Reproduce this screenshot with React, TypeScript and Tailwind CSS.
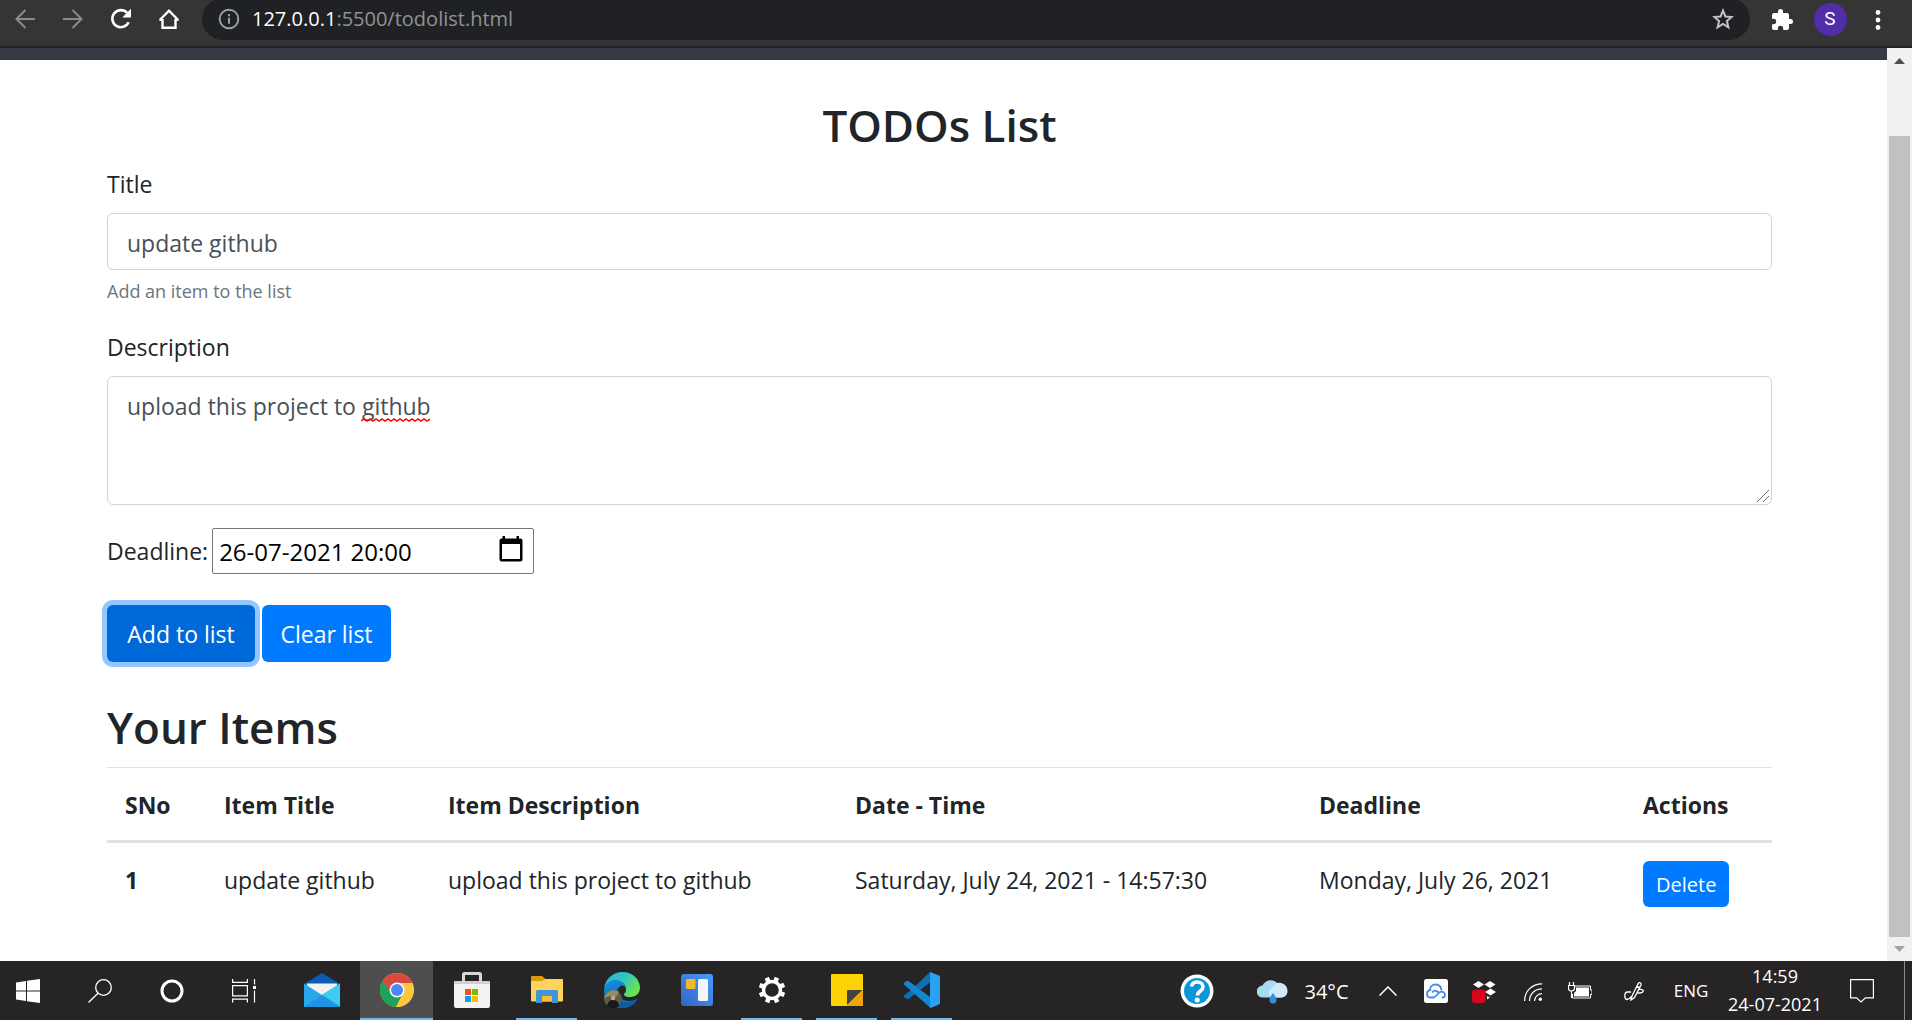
import React, { useState } from "react";

const svgBase = { xmlns: "http://www.w3.org/2000/svg", "aria-hidden": true } as const;

function BrowserButton({ label, className, children }: { label: string; className: string; children: React.ReactNode }) {
  return (
    <button type="button" aria-label={label} className={`flex h-full items-center justify-center ${className}`}>
      {children}
    </button>
  );
}

function BrowserBar() {
  return (
    <header className="flex h-12 shrink-0 items-start overflow-hidden border-b-2 border-[#202124] bg-[#353535]">
      <div className="flex h-[38px] shrink-0 items-center text-white">
        <BrowserButton label="Back" className="w-[50px] text-[#8b8b8b]">
          <svg {...svgBase} width="20" height="20" viewBox="0 0 20 20" fill="none" stroke="currentColor" strokeWidth="2">
            <path d="M20 10H2M10.500 1L1.500 10l9 9" />
          </svg>
        </BrowserButton>
        <BrowserButton label="Forward" className="w-[46px] text-[#8b8b8b]">
          <svg {...svgBase} width="20" height="20" viewBox="0 0 20 20" fill="none" stroke="currentColor" strokeWidth="2">
            <path d="M0 10h18M9.500 1l9 9-9 9" />
          </svg>
        </BrowserButton>
        <BrowserButton label="Reload" className="w-[50px]">
          <svg {...svgBase} width="22" height="22" viewBox="0 0 22 22">
            <path d="M18.600 14.200A8.500 8.500 0 1 1 17.200 5" fill="none" stroke="currentColor" strokeWidth="2.600" />
            <path d="M21 0.800v8.700h-8.700z" fill="currentColor" />
          </svg>
        </BrowserButton>
        <BrowserButton label="Home" className="w-[46px]">
          <svg {...svgBase} width="22" height="22" viewBox="0 0 22 22" fill="none" stroke="currentColor" strokeWidth="2.400">
            <path d="M4.500 11v8.800h13V11M1.800 12L11 2.600 20.200 12M1.500 11.800h3M17.500 11.800h3" />
          </svg>
        </BrowserButton>
      </div>
      <div className="-mt-0.5 ml-2.5 flex h-[42px] min-w-0 flex-1 items-center rounded-full bg-[#202124] px-4">
        <svg {...svgBase} width="22" height="22" viewBox="0 0 22 22" className="shrink-0 text-[#9aa0a6]">
          <circle cx="11" cy="11" r="9.300" fill="none" stroke="currentColor" strokeWidth="1.900" />
          <path d="M10 9.800h2v6h-2zM10 6h2v2.200h-2z" fill="currentColor" />
        </svg>
        <a href="#top" aria-label="Address" className="ml-3 flex-1 truncate font-['Open_Sans',sans-serif] text-[20px] text-[#8f9296]">
          <span className="text-white">127.0.0.1</span>:5500/todolist.html
        </a>
        <button type="button" aria-label="Bookmark this page">
          <svg {...svgBase} width="22" height="22" viewBox="0 0 22 22" fill="none" stroke="#c4c4c4" strokeWidth="2">
            <path d="M11 2.600l2.400 5.900 6.300.5-4.800 4.100 1.500 6.200L11 16l-5.400 3.300 1.500-6.200L2.300 9l6.300-.5z" />
          </svg>
        </button>
      </div>
      <div className="flex h-[39px] shrink-0 items-center text-white">
        <BrowserButton label="Extensions" className="ml-2 w-12">
          <svg {...svgBase} width="24" height="24" viewBox="0 0 24 24" fill="currentColor">
            <path d="M20.500 11H19V7c0-1.100-.9-2-2-2h-4V3.500a2.500 2.500 0 0 0-5 0V5H4c-1.100 0-2 .9-2 2v3.800h1.500a2.700 2.700 0 0 1 0 5.400H2V20c0 1.100.9 2 2 2h3.800v-1.500a2.700 2.700 0 0 1 5.400 0V22H17c1.100 0 2-.9 2-2v-4h1.500a2.500 2.500 0 0 0 0-5z" />
          </svg>
        </BrowserButton>
        <BrowserButton label="Profile" className="w-12">
          <span className="flex size-[33px] items-center justify-center rounded-full bg-[#512da8] font-['Roboto',sans-serif] text-[19px]">S</span>
        </BrowserButton>
        <BrowserButton label="Menu" className="mr-2.5 w-12">
          <svg {...svgBase} width="6" height="22" viewBox="0 0 6 22" fill="currentColor">
            <circle cx="3" cy="3.500" r="2.400" />
            <circle cx="3" cy="11" r="2.400" />
            <circle cx="3" cy="18.500" r="2.400" />
          </svg>
        </BrowserButton>
      </div>
    </header>
  );
}

function ScrollBar() {
  return (
    <div aria-hidden="true" className="flex w-[25px] shrink-0 flex-col items-center bg-[#f1f1f1]">
      <div className="flex h-[26px] items-center">
        <svg {...svgBase} width="11" height="6" viewBox="0 0 11 6"><path d="M0 6L5.500 0 11 6z" fill="#505050" /></svg>
      </div>
      <div className="mt-[62px] w-[21px] flex-1 bg-[#c1c1c1]" />
      <div className="flex h-6 items-center">
        <svg {...svgBase} width="11" height="6" viewBox="0 0 11 6"><path d="M0 0h11L5.500 6z" fill="#a3a3a3" /></svg>
      </div>
    </div>
  );
}

type Item = { title: string; description: string; created: string; deadline: string };

const fieldClass = "block w-full rounded-md border border-[#ced4da] bg-white px-[19px] text-[23px] leading-9 text-[#495057]";
const buttonClass = "rounded-md text-[23px] leading-9 h-[57px] text-white";

function TodoPage() {
  const [title, setTitle] = useState("update github");
  const [description, setDescription] = useState("upload this project to github");
  const [deadline, setDeadline] = useState("26-07-2021 20:00");
  const [items, setItems] = useState<Item[]>([
    {
      title: "update github",
      description: "upload this project to github",
      created: "Saturday, July 24, 2021 - 14:57:30",
      deadline: "Monday, July 26, 2021",
    },
  ]);

  return (
    <main className="min-w-0 flex-1 border-t-12 border-[#363a43] bg-white pr-[115px] pl-[107px] font-['Open_Sans',sans-serif] text-[23px] leading-9 text-[#212529]">
      <h1 className="mt-9 text-center text-[44px] leading-[58px] font-semibold">TODOs List</h1>
      <form onSubmit={(e) => e.preventDefault()}>
        <label htmlFor="title" className="mt-3 block">Title</label>
        <input id="title" className={`mt-[11px] h-[57px] pt-0.5 ${fieldClass}`} value={title} onChange={(e) => setTitle(e.target.value)} />
        <small className="mt-[7px] block text-[18px] leading-7 text-[#6c757d]">Add an item to the list</small>
        <label htmlFor="description" className="mt-6 block">Description</label>
        <div className="relative mt-[11px]">
          <textarea
            id="description"
            spellCheck={false}
            className={`h-[129px] resize-none py-[11px] ${fieldClass}`}
            value={description}
            onChange={(e) => setDescription(e.target.value)}
          />
          <svg {...svgBase} width="69" height="4" viewBox="0 0 69 4" className="absolute top-[42px] left-[254px]" fill="none" stroke="#f00" strokeWidth="1.500">
            <path d="M0 3l3-2 3 2 3-2 3 2 3-2 3 2 3-2 3 2 3-2 3 2 3-2 3 2 3-2 3 2 3-2 3 2 3-2 3 2 3-2 3 2 3-2 3 2 3-2" />
          </svg>
          <svg {...svgBase} width="14" height="14" viewBox="0 0 14 14" className="absolute right-0.5 bottom-0.5" fill="none" stroke="#6b6b6b" strokeWidth="1">
            <path d="M1 13L13 1M7 13l6-6" />
          </svg>
        </div>
        <div className="mt-[23px] flex items-center gap-1">
          <label htmlFor="deadline">Deadline:</label>
          <div className="flex h-[46px] w-[322px] items-center rounded-xs border border-[#767676] pr-2.5 pl-1.5">
            <input id="deadline" className="min-w-0 flex-1 bg-transparent pt-0.5 text-[24px] text-black" value={deadline} onChange={(e) => setDeadline(e.target.value)} />
            <button type="button" aria-label="Choose date" className="pb-1">
              <svg {...svgBase} width="24" height="26" viewBox="0 0 24 26" fill="#000">
                <path d="M3.500 0h2.500v2.500h11.500V0H20v2.500h1.500A2 2 0 0 1 23.500 4.500v19a2 2 0 0 1-2 2h-19a2 2 0 0 1-2-2v-19a2 2 0 0 1 2-2h1zM3 8v15h18V8z" />
              </svg>
            </button>
          </div>
        </div>
        <div className="mt-[31px] flex gap-[7px]">
          <button type="submit" className={`w-[148px] bg-[#0069d9] ring-5 ring-[#94c7ff] ${buttonClass}`}>Add to list</button>
          <button type="button" className={`w-[129px] bg-[#007bff] ${buttonClass}`} onClick={() => setItems([])}>Clear list</button>
        </div>
      </form>
      <h2 className="mt-9 text-[44px] leading-[58px] font-semibold">Your Items</h2>
      <table className="mt-[11px] w-full table-fixed border-t border-[#dee2e6] text-left">
        <colgroup>
          <col className="w-[99px]" />
          <col className="w-[224px]" />
          <col className="w-[407px]" />
          <col className="w-[464px]" />
          <col className="w-[324px]" />
          <col className="w-[147px]" />
        </colgroup>
        <thead>
          <tr className="border-b-3 border-[#dee2e6]">
            {["SNo", "Item Title", "Item Description", "Date - Time", "Deadline", "Actions"].map((h) => (
              <th key={h} scope="col" className="px-[18px] pt-[19px] pb-[17px] font-bold whitespace-nowrap">{h}</th>
            ))}
          </tr>
        </thead>
        <tbody>
          {items.map((item, i) => (
            <tr key={item.title} className="align-top">
              <th scope="row" className="px-[18px] pt-[19px] font-bold">{i + 1}</th>
              <td className="px-[18px] pt-[19px]">{item.title}</td>
              <td className="px-[18px] pt-[19px]">{item.description}</td>
              <td className="pt-[19px] pl-[18px]">{item.created}</td>
              <td className="px-[18px] pt-[19px]">{item.deadline}</td>
              <td className="p-[18px]">
                <button type="button" className="block h-[46px] rounded-md bg-[#007bff] px-[13px] pt-0.5 text-[20px] leading-7 text-white" onClick={() => setItems(items.filter((_, n) => n !== i))}>
                  Delete
                </button>
              </td>
            </tr>
          ))}
        </tbody>
      </table>
    </main>
  );
}

function MailIcon() {
  return (
    <svg {...svgBase} width="36" height="34" viewBox="0 0 36 34">
      <path d="M0 11L18 0l18 11v8H0z" fill="#0a5cb0" />
      <path d="M3 10.500h30V22H3z" fill="#f2f2f2" />
      <path d="M0 10.500l18 11.500L36 10.500V34H0z" fill="#28a8ea" />
      <path d="M18 22l18-11.500V33z" fill="#3fcbf2" />
      <path d="M0 34l18-12 18 12z" fill="#1e93e4" />
    </svg>
  );
}

function ChromeIcon() {
  return (
    <svg {...svgBase} width="34" height="34" viewBox="0 0 34 34">
      <circle cx="17" cy="17" r="17" fill="#fdc73e" />
      <path d="M2.300 8.500A17 17 0 0 1 31.700 8.500L32.300 10H17L10.900 20.500z" fill="#d9493f" />
      <path d="M2.900 7.500A17 17 0 0 0 16 34l7-13.500-6 3.500-6.100-3.500z" fill="#1da15d" />
      <path d="M17 10h15.300A17 17 0 0 1 16 34l7.100-13.500z" fill="#fdc73e" />
      <circle cx="17" cy="17" r="7.500" fill="#fff" />
      <circle cx="17" cy="17" r="6" fill="#4a8af4" />
    </svg>
  );
}

function StoreIcon() {
  return (
    <svg {...svgBase} width="36" height="36" viewBox="0 0 36 36">
      <path d="M9.500 12V2.500a1 1 0 0 1 1-1h15a1 1 0 0 1 1 1V12" fill="none" stroke="#d8d8d8" strokeWidth="3" />
      <path d="M0 9h36v25a2 2 0 0 1-2 2H2a2 2 0 0 1-2-2z" fill="#f3f3f3" />
      <path d="M0 9h36v3H0z" fill="#d0d0d0" />
      <path d="M11 17h6v6h-6z" fill="#f25022" />
      <path d="M18 17h6v6h-6z" fill="#7fba00" />
      <path d="M11 24h6v6h-6z" fill="#00a4ef" />
      <path d="M18 24h6v6h-6z" fill="#ffb900" />
    </svg>
  );
}

function ExplorerIcon() {
  return (
    <svg {...svgBase} width="32" height="27" viewBox="0 0 32 27">
      <path d="M0 1a1 1 0 0 1 1-1h10l4 3.500V8H0z" fill="#e09a09" />
      <path d="M0 5h11l4-2h16a1 1 0 0 1 1 1v20.500a1 1 0 0 1-1 1H1a1 1 0 0 1-1-1z" fill="#ffd35c" />
      <path d="M5 27V15.500a1.500 1.500 0 0 1 1.500-1.500h19a1.500 1.500 0 0 1 1.500 1.500V27h-6v-7H11v7z" fill="#3d95da" />
      <path d="M11 20h10v5.500H11z" fill="#fbbd2d" />
    </svg>
  );
}

function EdgeIcon() {
  return (
    <svg {...svgBase} width="36" height="36" viewBox="0 0 36 36">
      <defs>
        <linearGradient id="edgeTop" x1="0" y1="0" x2="1" y2="0.600">
          <stop offset="0" stopColor="#2ab0e8" />
          <stop offset="0.500" stopColor="#2fc5c4" />
          <stop offset="1" stopColor="#6be64b" />
        </linearGradient>
        <linearGradient id="edgeSide" x1="0" y1="0" x2="0.300" y2="1">
          <stop offset="0" stopColor="#1590df" />
          <stop offset="1" stopColor="#0b6cc0" />
        </linearGradient>
      </defs>
      <path d="M0 17C1 7 9 0 18.500 0 28.500 0 36 7.500 36 15.500c0 6-4.500 9.500-9.500 9.500-4 0-6.500-1.200-6.500-2.600 0-1 2-1.700 2-5C22 12 17 8.500 11.500 8.500 6 8.500 2 12 0 17z" fill="url(#edgeTop)" />
      <path d="M0 18.500C1 11.500 6 8 11.500 8c6 0 10.500 4 10.500 8.500-1-2.500-3.500-3.500-5.500-2.500-3.500 2-3.500 8-.5 11.500 4 4.500 11 4 17.500 1.500C30.500 33 25 36 18 36 7 36-.5 28 0 18.500z" fill="url(#edgeSide)" />
      <path d="M15 15c-4 4-3.500 9 0 12.500 5 4.500 12 3 18-.5C30 33 25 36 18 36c-6-2-9-7-8.500-12 .3-4 2.500-7.500 5.500-9z" fill="#0c59a4" />
      <circle cx="9" cy="27" r="9" fill="#59603f" />
      <path d="M0 26c2-7 9-10 15-6l-3 5-6-1z" fill="#8b9165" />
      <path d="M3 34c1-5 3-6 6-6s6 2 6 6c-3 3-9 3-12 0z" fill="#17171d" />
      <circle cx="9" cy="26" r="2.200" fill="#d79a80" />
    </svg>
  );
}

function BoardIcon() {
  return (
    <svg {...svgBase} width="32" height="32" viewBox="0 0 32 32">
      <defs>
        <linearGradient id="board" x1="1" y1="0" x2="0" y2="1">
          <stop offset="0" stopColor="#4c9aff" />
          <stop offset="1" stopColor="#3365c4" />
        </linearGradient>
      </defs>
      <rect width="32" height="32" rx="3" fill="url(#board)" />
      <rect x="5" y="5" width="9.500" height="10" rx="1.500" fill="#f5b82a" />
      <rect x="17" y="5" width="10" height="22" rx="1.500" fill="#f4f5f8" />
    </svg>
  );
}

function GearIcon() {
  return (
    <svg {...svgBase} width="28" height="28" viewBox="0 0 28 28" stroke="#fff">
      <circle cx="14" cy="14" r="8.500" fill="none" strokeWidth="3.400" />
      <g strokeWidth="4.600">
        <path d="M12.500 0.800l.6 4M15.500 27.200l-.6-4" transform="rotate(28 14 14)" />
        <path d="M12.500 0.800l.6 4M15.500 27.200l-.6-4" transform="rotate(73 14 14)" />
        <path d="M12.500 0.800l.6 4M15.500 27.200l-.6-4" transform="rotate(118 14 14)" />
        <path d="M12.500 0.800l.6 4M15.500 27.200l-.6-4" transform="rotate(163 14 14)" />
      </g>
    </svg>
  );
}

function NotesIcon() {
  return (
    <svg {...svgBase} width="32" height="32" viewBox="0 0 32 32">
      <rect width="32" height="32" rx="1" fill="#fdd207" />
      <path d="M16 31V17a1 1 0 0 1 1-1h14.500z" fill="#434343" />
      <path d="M16 32L32 16v15a1 1 0 0 1-1 1z" fill="#efa30d" />
    </svg>
  );
}

function CodeIcon() {
  return (
    <svg {...svgBase} width="36" height="36" viewBox="0 0 36 36">
      <path d="M26 0L7.500 17.500 0 23.500V25l2.500 2 2 .1L26 10.500z" fill="#0a70b0" />
      <path d="M26.500 36L0 12.500V11l2.500-2h2L26 25z" fill="#1287d0" />
      <path d="M26 0l9 3.500a1.500 1.500 0 0 1 1 1.500v26a1.500 1.500 0 0 1-1 1.500L26.500 36c-.5 0-.5-.5-.5-1z" fill="#29a2f4" />
    </svg>
  );
}

const apps = [
  { name: "Mail", icon: <MailIcon />, state: "idle" },
  { name: "Chrome", icon: <ChromeIcon />, state: "active" },
  { name: "Store", icon: <StoreIcon />, state: "idle" },
  { name: "File Explorer", icon: <ExplorerIcon />, state: "open" },
  { name: "Edge", icon: <EdgeIcon />, state: "idle" },
  { name: "Board", icon: <BoardIcon />, state: "idle" },
  { name: "Settings", icon: <GearIcon />, state: "open" },
  { name: "Sticky Notes", icon: <NotesIcon />, state: "open" },
  { name: "Code", icon: <CodeIcon />, state: "open" },
];

function TrayButton({ label, className, children }: { label: string; className: string; children: React.ReactNode }) {
  return (
    <button type="button" aria-label={label} className={`flex h-full shrink-0 items-center justify-center ${className}`}>
      {children}
    </button>
  );
}

function TaskBar() {
  return (
    <footer className="flex h-[59px] shrink-0 bg-[#272425] font-['Open_Sans',sans-serif] text-white">
      <div className="flex shrink-0">
        <TrayButton label="Start" className="w-16 pr-2">
          <svg {...svgBase} width="24" height="24" viewBox="0 0 24 24" fill="#fff">
            <path d="M0 3.400l10-1.400v9.500H0zM11 1.800L24 0v11.500H11zM0 12.500h10V22L0 20.600zM11 12.500h13V24l-13-1.800z" />
          </svg>
        </TrayButton>
        <TrayButton label="Search" className="w-[72px]">
          <svg {...svgBase} width="24" height="24" viewBox="0 0 24 24" fill="none" stroke="#fff" strokeWidth="1.300">
            <circle cx="15.500" cy="8.500" r="7.800" />
            <path d="M10 14.200L0.500 23.500" />
          </svg>
        </TrayButton>
        <TrayButton label="Cortana" className="w-[72px]">
          <svg {...svgBase} width="24" height="24" viewBox="0 0 24 24" fill="none" stroke="#fff" strokeWidth="3">
            <circle cx="12" cy="12" r="10" />
          </svg>
        </TrayButton>
        <TrayButton label="Task view" className="w-[72px]">
          <svg {...svgBase} width="24" height="24" viewBox="0 0 24 24" fill="none" stroke="#fff" strokeWidth="1.200">
            <path d="M.6 0v3.400h14.800V0M.6 6.600h14.800v10.200H.6zM.6 23.500v-3.400h14.800v3.400M22.500 0v5.500M22.500 11.500v12" />
            <path d="M21 7h3v3h-3z" fill="#fff" stroke="none" />
          </svg>
        </TrayButton>
        <nav aria-label="Applications" className="ml-1 flex">
          {apps.map((app) => (
            <button key={app.name} type="button" aria-label={app.name} className="flex h-full w-[75px] justify-center">
              <span
                className={
                  app.state === "active"
                    ? "flex h-full w-[73px] items-center justify-center border-b-2 border-[#76b9ed] bg-[#4e4e4e]"
                    : app.state === "open"
                      ? "flex h-full w-[61px] items-center justify-center border-b-2 border-[#76b9ed]"
                      : "flex h-full w-[61px] items-center justify-center border-b-2 border-transparent"
                }
              >
                {app.icon}
              </span>
            </button>
          ))}
        </nav>
      </div>
      <div className="ml-auto flex shrink-0">
        <TrayButton label="Help" className="w-[94px]">
          <svg {...svgBase} width="34" height="34" viewBox="0 0 34 34">
            <circle cx="17" cy="17" r="16.500" fill="#fff" />
            <circle cx="17" cy="17" r="13" fill="#0a97d9" />
            <path d="M11.500 12.500c.5-3 3-4.500 5.500-4.500 3.500 0 6 2 6 5 0 4-5.500 4-5.500 8.500" fill="none" stroke="#fff" strokeWidth="3.600" />
            <circle cx="17.200" cy="26" r="2.500" fill="#fff" />
          </svg>
        </TrayButton>
        <TrayButton label="Weather" className="w-[118px] gap-4 pt-0.5">
          <svg {...svgBase} width="31" height="24" viewBox="0 0 31 24">
            <path d="M6 17.500a6 6 0 0 1-.5-12A9 9 0 0 1 21 4a7 7 0 0 1 3 13.500z" fill="#a9d8f5" />
            <path d="M14 17.500a5.500 5.500 0 0 1 1-9.500 8 8 0 0 1 15.500 3c0 4-2.500 6.500-6.500 6.500z" fill="#cfeafa" />
            <path d="M16 13c2 3 3.500 4.500 3.500 7a3.500 3.500 0 0 1-7 0c0-2.500 1.500-4 3.500-7z" fill="#3a8de0" />
          </svg>
          <span className="text-[20px]">34°C</span>
        </TrayButton>
        <TrayButton label="Show hidden icons" className="w-[52px]">
          <svg {...svgBase} width="18" height="10" viewBox="0 0 18 10" fill="none" stroke="#fff" strokeWidth="1.500">
            <path d="M.5 9.500L9 1l8.500 8.500" />
          </svg>
        </TrayButton>
        <TrayButton label="Cloud backup" className="w-11">
          <svg {...svgBase} width="24" height="24" viewBox="0 0 24 24">
            <rect width="24" height="24" rx="2.500" fill="#fff" />
            <path d="M11 17.500c2-.5 3-3.500 5-4.500 2.500-1 5 .5 5 3 0 1.500-1 2.500-2.500 2.500M14.500 13.500c-1.500-2-4.500-2.500-6-.5M6 11C6 7.500 8.500 5.500 11.500 5.500c3.200 0 5.500 2.200 5.800 5.200M6.500 11C4.500 11.300 3 12.800 3 15c0 2 1.500 3.500 3.500 3.500h3.500" fill="none" stroke="#4a86f0" strokeWidth="1.800" strokeLinecap="round" />
          </svg>
        </TrayButton>
        <TrayButton label="Dropbox" className="w-[52px]">
          <svg {...svgBase} width="24" height="24" viewBox="0 0 24 24">
            <path d="M6.500 2L12 5.500 6.500 9 1 5.500zM18 2l5.500 3.500L18 9l-5.500-3.500zM18.500 9.500L24 13l-5.500 3.500L13 13zM15 17l3 1.500-3 2z" fill="#fff" />
            <rect y="10.500" width="13.500" height="13.500" rx="3" fill="#d8041c" />
          </svg>
        </TrayButton>
        <TrayButton label="Network" className="w-[46px] pt-0.5">
          <svg {...svgBase} width="18" height="18" viewBox="0 0 18 18" fill="none" stroke="#fff" strokeWidth="1.200">
            <path d="M.6 18C.6 8 8 .8 18 .8M5.500 18C5.500 11 11 5.800 18 5.800M10.500 18c0-4 3.500-7.300 7.500-7.300" />
            <circle cx="16.300" cy="16.300" r="1.700" fill="#fff" stroke="none" />
          </svg>
        </TrayButton>
        <TrayButton label="Battery" className="w-12">
          <svg {...svgBase} width="24" height="17" viewBox="0 0 24 17">
            <path d="M6 4h16.500v4H24v4.500h-1.500V16H4.500v-4" fill="none" stroke="#fff" strokeWidth="1" />
            <path d="M8 5.500h13v9H6v-3.500l2-2z" fill="#fff" />
            <path d="M1.500 0v3.500M5.500 0v3.500M.5 3.500h6v2.500c0 2-1 3-3 3s-3-1-3-3zM3.500 9v7" fill="none" stroke="#fff" strokeWidth="1.200" />
          </svg>
        </TrayButton>
        <TrayButton label="Pen" className="w-[60px]">
          <svg {...svgBase} width="20" height="20" viewBox="0 0 20 20" fill="none" stroke="#fff" strokeWidth="1.300">
            <path d="M8 15L7 19l3.500-2.500L17 4c.5-1.500-1-3-2.500-2L8 15M12.500 5l2.800 1.500M7 11H3.500C0 11 0 18.500 3 18.500c2 0 3-1 4.500-3M15 8.500c5-1 6 3 1 3.500h-2.500" />
          </svg>
        </TrayButton>
        <TrayButton label="Language" className="w-[54px] text-[17px]">
          <span>ENG</span>
        </TrayButton>
        <TrayButton label="Clock" className="w-[114px] flex-col pb-0.5 text-[18px] leading-7">
          <span>14:59</span>
          <span>24-07-2021</span>
        </TrayButton>
        <TrayButton label="Notifications" className="w-[60px]">
          <svg {...svgBase} width="24" height="24" viewBox="0 0 24 24" fill="none" stroke="#fff" strokeWidth="1.200">
            <path d="M.6.6h22.800v18.200h-8L11 23l-4.400-4.200h-6z" />
          </svg>
        </TrayButton>
        <div className="mr-[7px] ml-3 w-px bg-[#8b8b8b]" />
      </div>
    </footer>
  );
}

export default function App() {
  return (
    <div id="top" className="flex min-h-screen flex-col bg-white">
      <BrowserBar />
      <div className="flex flex-1">
        <TodoPage />
        <ScrollBar />
      </div>
      <TaskBar />
    </div>
  );
}
